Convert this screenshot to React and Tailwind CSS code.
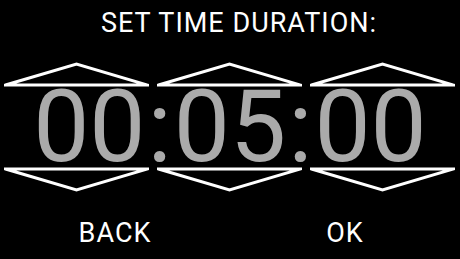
import React from "react"

const Arrow = ({ down }) => (
  <svg width="145" height="26" viewBox="0 0 145 26" className="block">
    <polygon
      points={down ? "1.5,2 72.5,23 143.5,2" : "1.5,24 72.5,3 143.5,24"}
      fill="none"
      stroke="#ffffff"
      strokeWidth="3"
      strokeLinejoin="miter"
      strokeMiterlimit="20"
    />
  </svg>
)

export default function App() {
  const font = { fontFamily: "Roboto, 'Liberation Sans', sans-serif" }
  return (
    <main className="w-[460px] h-[259px] bg-black text-white overflow-hidden flex flex-col" style={font}>
      <h1 className="mt-[10px] pl-[18px] text-center text-[27px] leading-[27px] font-normal tracking-[1px]">SET TIME DURATION:</h1>

      <div className="mt-[24px] flex gap-[8px] pl-[4px]">
        <Arrow />
        <Arrow />
        <Arrow />
      </div>

      <div className="mt-[4px] flex justify-center text-[100px] leading-[72px] text-[#aaaaaa]">
        <span>00</span>
        <span className="mx-[2px]">:</span>
        <span>05</span>
        <span className="mx-[2px]">:</span>
        <span>00</span>
      </div>

      <div className="mt-[4px] flex gap-[8px] pl-[4px]">
        <Arrow down />
        <Arrow down />
        <Arrow down />
      </div>

      <div className="mt-[27px] grid grid-cols-2 text-[27px] leading-[27px] tracking-[1px]">
        <button className="text-center">BACK</button>
        <button className="text-center">OK</button>
      </div>
    </main>
  )
}
